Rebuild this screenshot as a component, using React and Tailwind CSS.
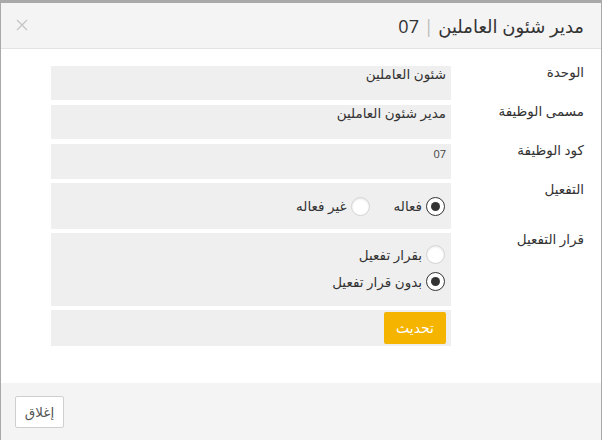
import React from "react";

function Radio({ checked, label }) {
  return (
    <div className="flex items-center gap-[4px]">
      {checked ? (
        <span className="w-[19px] h-[19px] rounded-full border-[1.5px] border-[#333] bg-white flex items-center justify-center">
          <span className="w-[9px] h-[9px] rounded-full bg-[#333]" />
        </span>
      ) : (
        <span className="w-[19px] h-[19px] rounded-full border border-[#d4d4d4] bg-white shadow-[inset_0_1px_2px_rgba(0,0,0,0.1)]" />
      )}
      <span className="text-[13.5px] text-[#333] leading-[18px]">{label}</span>
    </div>
  );
}

function Row({ label, children }) {
  return (
    <div className="flex items-start">
      <div className="w-[133px] shrink-0 text-[13.5px] text-[#333] leading-[16px] -mt-[2px]">{label}</div>
      <div className="flex-1">{children}</div>
    </div>
  );
}

export default function App() {
  return (
    <div
      className="w-[602px] h-[440px] bg-[#a9a9a9] pt-[3px] pl-[1px] overflow-hidden"
      style={{ fontFamily: '"Open Sans", "DejaVu Sans", sans-serif' }}
    >
      <div dir="rtl" className="w-[600px] h-[437px] bg-white flex flex-col">
        <div className="h-[46px] shrink-0 bg-[#f4f4f4] border-b border-[#e3e3e3] flex items-center justify-between pr-[17px] pl-[15px]">
          <div className="text-[18px] text-[#333] leading-[24px]">
            مدير شئون العاملين <span className="text-[#bbb]">|</span> 07
          </div>
          <svg width="12" height="12" viewBox="0 0 12 12" className="mb-[1px]">
            <path d="M1 1 L11 11 M11 1 L1 11" stroke="#c4c4c4" strokeWidth="1.3" />
          </svg>
        </div>

        <div className="flex-1 pt-[17px] pr-[17px] pl-[50px] flex flex-col">
          <Row label="الوحدة">
            <div className="h-[34px] bg-[#efefef] pr-[5px] text-[13.5px] text-[#333] leading-[16px]">
              شئون العاملين
            </div>
          </Row>
          <div className="h-[5px]" />
          <Row label="مسمى الوظيفة">
            <div className="h-[34px] bg-[#efefef] pr-[5px] text-[13.5px] text-[#333] leading-[16px]">
              مدير شئون العاملين
            </div>
          </Row>
          <div className="h-[5px]" />
          <Row label="كود الوظيفة">
            <div className="h-[35px] bg-[#efefef] pr-[5px] pt-[1px] text-[11px] text-[#444] leading-[18px]">
              07
            </div>
          </Row>
          <div className="h-[4px]" />
          <Row label="التفعيل">
            <div className="h-[46px] bg-[#efefef] pr-[6px] flex items-center gap-[24px]">
              <Radio checked label="فعاله" />
              <Radio label="غير فعاله" />
            </div>
          </Row>
          <div className="h-[4px]" />
          <Row label="قرار التفعيل">
            <div className="h-[73px] bg-[#efefef] pr-[6px] pt-[12px] flex flex-col gap-[8px] items-start">
              <Radio label="بقرار تفعيل" />
              <Radio checked label="بدون قرار تفعيل" />
            </div>
          </Row>
          <div className="h-[4px]" />
          <Row label="">
            <div className="h-[36px] bg-[#efefef] pr-[5px] pt-[2px]">
              <button className="h-[32px] w-[62px] bg-[#f5b400] rounded-[2px] text-white text-[14px] leading-[20px]">
                تحديث
              </button>
            </div>
          </Row>
        </div>

        <div className="h-[57px] shrink-0 bg-[#f4f4f4] flex items-center justify-end pl-[14px]">
          <button className="h-[32px] w-[49px] bg-white border border-[#cfcfcf] rounded-[2px] text-[13.5px] text-[#555] leading-[20px]">
            إغلاق
          </button>
        </div>
      </div>
    </div>
  );
}
